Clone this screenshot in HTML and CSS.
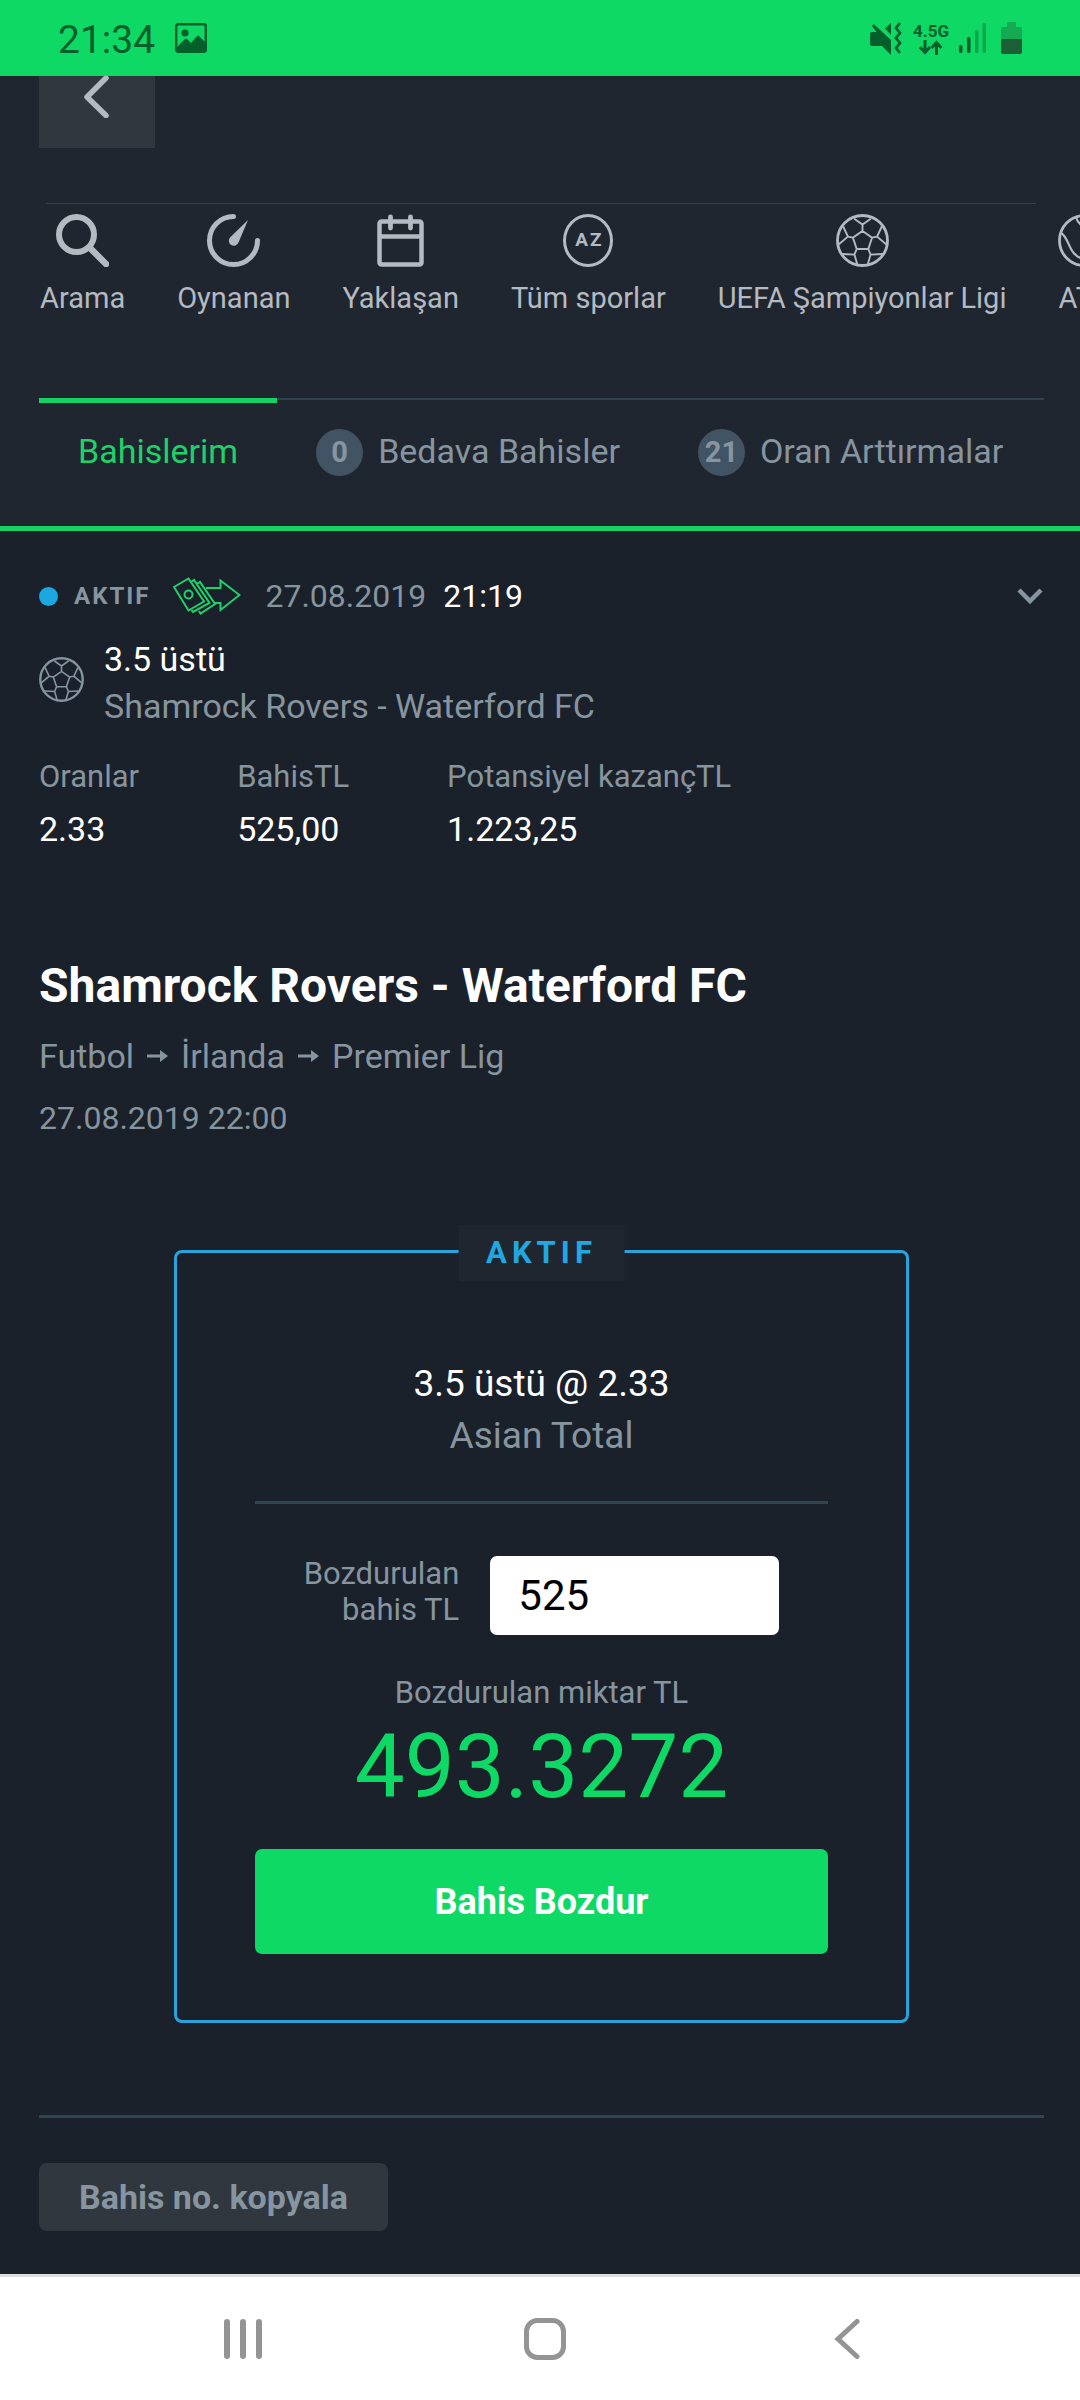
FILE: index.html
```html
<!DOCTYPE html>
<html lang="tr">
<head>
    <meta charset="UTF-8">
    <meta name="viewport" content="width=device-width, initial-scale=1.0">
    <title>Bahislerim</title>
    <link rel="stylesheet" href="styles.css">
</head>
<body>
    <svg class="defs" width="0" height="0">
        <symbol id="football" viewBox="0 0 53 53">
            <circle cx="26.5" cy="26.5" r="25" stroke-width="2.8"/>
            <path d="M26.5 17l9.6 6.6-3.8 11.4H20.7l-3.8-11.4zM26.5 17v-6.5M18.2 4.7l8.3 5.8 8.3-5.8M36.1 23.6l5-1M45.8 12.5l-4.7 10.1L51 31M16.9 23.6l-5-1M7.2 12.5l4.7 10.1L2 31M32.3 35l2.3 5.6M46.8 40l-12.2.6-3 10.2M20.7 35l-2.3 5.6M6.2 40l12.2.6 3 10.2" stroke-width="1.9"/>
        </symbol>
    </svg>

    <div class="status-bar">
        <span class="clock">21:34</span>
        <svg class="picture" width="32" height="30" viewBox="0 0 32 30">
            <rect x="1.2" y="1.2" width="29.6" height="27.6" rx="2" fill="none" stroke="currentColor" stroke-width="2.4"/>
            <circle cx="10" cy="10" r="3.6"/>
            <path d="M2 24l8-8q1-1 2 0l4 4 6-7q1-1 2 0l6 6v8q0 1-1 1H3q-1 0-1-1z"/>
        </svg>
        <div class="status-right">
            <svg width="33" height="33" viewBox="0 0 33 33">
                <path d="M2 10h4.500L2 4l1.700-2L21 18v15l-9-9H2q-2 0-2-2V12q0-2 2-2zM21 1v12l-6-6.500z"/>
                <path d="M30 1l-4 5 4 5-4 5 4 5-4 5 4 5" fill="none" stroke="currentColor" stroke-width="2.800"/>
            </svg>
            <div class="network">
                <span>4.5G</span>
                <svg width="24" height="15" viewBox="0 0 24 15" fill="none" stroke="currentColor" stroke-width="3">
                    <path d="M6 0v12M1 7l5 5.500L11 7M17.500 15V3M12.500 8l5-5.500 5 5.500"/>
                </svg>
            </div>
            <svg width="28" height="32" viewBox="0 0 28 32">
                <rect y="23" width="3.500" height="8" rx="1.500"/>
                <rect x="8" y="15" width="3.500" height="16" rx="1.500"/>
                <rect class="dim" x="16" y="8" width="3.500" height="23" rx="1.500"/>
                <rect class="dim" x="23.500" y="1" width="3.500" height="30" rx="1.500"/>
            </svg>
            <svg class="battery" width="21" height="33" viewBox="0 0 21 33">
                <path class="battery-top" d="M6 0h9v5h4q2 0 2 2v10H0V7q0-2 2-2h4z"/>
                <path class="battery-fill" d="M0 17h21v13q0 2-2 2H2q-2 0-2-2z"/>
            </svg>
        </div>
    </div>

    <header class="header">
        <button class="back-btn" aria-label="Geri">
            <svg width="28" height="42" viewBox="0 0 28 42">
                <path d="M23 2L4 21l19 18.500" fill="none" stroke="currentColor" stroke-width="5.500" stroke-linecap="round" stroke-linejoin="round"/>
            </svg>
        </button>

        <nav class="shortcuts">
            <a href="#">
                <svg width="53" height="53" viewBox="0 0 53 53" stroke-linecap="round">
                    <circle cx="20.500" cy="20.500" r="17.500" stroke-width="6"/>
                    <path d="M34 34l16 16" stroke-width="6.500"/>
                </svg>
                Arama
            </a>
            <a href="#">
                <svg width="53" height="53" viewBox="0 0 53 53" stroke-linecap="round">
                    <path d="M26.500 2.500A24 24 0 1 0 50.500 26.500" stroke-width="5"/>
                    <path class="solid" d="M41 6L31.500 28.500a5 5 0 1 1-8.500-5z"/>
                </svg>
                Oynanan
            </a>
            <a href="#">
                <svg width="53" height="53" viewBox="0 0 53 53" stroke-linecap="round">
                    <rect x="5.500" y="7.500" width="42" height="43" rx="2" stroke-width="4.500"/>
                    <path d="M6 22.500h41" stroke-width="4.500"/>
                    <path d="M16.500 3v11M36.500 3v11" stroke-width="4.800"/>
                </svg>
                Yaklaşan
            </a>
            <a href="#">
                <span class="az">AZ</span>
                Tüm sporlar
            </a>
            <a href="#">
                <svg width="53" height="53"><use href="#football"/></svg>
                UEFA Şampiyonlar Ligi
            </a>
            <a href="#">
                <svg width="53" height="53" viewBox="0 0 53 53">
                    <circle cx="26.500" cy="26.500" r="25" stroke-width="2.800"/>
                    <path d="M3 19C12 24 10 42 26 45M18 3C22 18 40 12 50 31" stroke-width="2.200"/>
                </svg>
                ATP
            </a>
        </nav>

        <nav class="tabs">
            <a href="#" class="tab active">Bahislerim</a>
            <a href="#" class="tab"><span class="badge">0</span>Bedava Bahisler</a>
            <a href="#" class="tab"><span class="badge">21</span>Oran Arttırmalar</a>
        </nav>
    </header>

    <main class="content">
        <div class="bet-head">
            <span class="dot"></span>
            <span class="bet-status">AKTIF</span>
            <svg class="cash" width="68" height="38" viewBox="0 0 68 38">
                <path d="M1 10L15.500 1.500 31 24.500 15.500 33.500z"/>
                <circle cx="15.500" cy="17.500" r="4"/>
                <path d="M18 5l3-2L36.500 26 20 35l-1.500-2M24 7l3-2L42 27 27.500 36.500 26 34M33 11h14.500V3.500L66.500 18 47.500 33v-7H41"/>
            </svg>
            <span class="bet-date">27.08.2019</span>
            <span class="bet-time">21:19</span>
            <button class="toggle" aria-label="Detay">
                <svg width="28" height="18" viewBox="0 0 28 18">
                    <path d="M3 3l11 11L25 3" fill="none" stroke="currentColor" stroke-width="4.500"/>
                </svg>
            </button>
        </div>

        <div class="selection">
            <svg width="45" height="45"><use href="#football"/></svg>
            <div>
                <p class="white">3.5 üstü</p>
                <p>Shamrock Rovers - Waterford FC</p>
            </div>
        </div>

        <dl class="stats">
            <div><dt>Oranlar</dt><dd>2.33</dd></div>
            <div><dt>BahisTL</dt><dd>525,00</dd></div>
            <div><dt>Potansiyel kazançTL</dt><dd>1.223,25</dd></div>
        </dl>

        <h1>Shamrock Rovers - Waterford FC</h1>
        <div class="breadcrumb">
            <span>Futbol</span>
            <svg width="21" height="14" viewBox="0 0 21 14"><path d="M0 5.500h13V1l8 6-8 6V8.500H0z"/></svg>
            <span>İrlanda</span>
            <svg width="21" height="14" viewBox="0 0 21 14"><path d="M0 5.500h13V1l8 6-8 6V8.500H0z"/></svg>
            <span>Premier Lig</span>
        </div>
        <p class="match-date">27.08.2019 22:00</p>

        <section class="cashout">
            <span class="cashout-tag">AKTIF</span>
            <p class="white">3.5 üstü @ 2.33</p>
            <p>Asian Total</p>
            <hr>
            <div class="form-group">
                <label for="stake">Bozdurulan<br>bahis TL</label>
                <input type="text" id="stake" value="525">
            </div>
            <div class="amount-label">Bozdurulan miktar TL</div>
            <div class="amount">493.3272</div>
            <button class="cashout-btn">Bahis Bozdur</button>
        </section>

        <hr>
        <button class="copy-btn">Bahis no. kopyala</button>
    </main>

    <footer class="nav-bar">
        <button aria-label="Son uygulamalar">
            <svg width="40" height="42" viewBox="0 0 40 42" stroke-width="6" stroke-linecap="round">
                <path d="M4 4v34M20 4v34M36 4v34"/>
            </svg>
        </button>
        <button aria-label="Ana ekran">
            <svg width="42" height="42" viewBox="0 0 42 42" stroke-width="5">
                <rect x="2.500" y="2.500" width="37" height="37" rx="11"/>
            </svg>
        </button>
        <button aria-label="Geri">
            <svg width="26" height="42" viewBox="0 0 26 42" stroke-width="5" stroke-linecap="round">
                <path d="M23 3.500L4 21l19 17.500"/>
            </svg>
        </button>
    </footer>
</body>
</html>
```
FILE: styles.css
```css
* {
    box-sizing: border-box;
}

body {
    font-family: Roboto, "Liberation Sans", sans-serif;
    font-size: 34px;
    margin: 0;
    min-height: 100vh;
    background-color: #1b212a;
    color: #86959f;
    display: flex;
    flex-direction: column;
}

h1, p, dl, dd {
    margin: 0;
}

a {
    color: inherit;
    text-decoration: none;
}

button {
    font-family: inherit;
    border: none;
    padding: 0;
    background: none;
    color: inherit;
    cursor: pointer;
}

svg {
    display: block;
    flex-shrink: 0;
}

hr {
    height: 3px;
    border: none;
    background-color: #304550;
}

.defs {
    position: absolute;
}

.white {
    color: #fff;
}

/* status bar */
.status-bar {
    display: flex;
    align-items: center;
    height: 76px;
    padding: 0 58px;
    background-color: #0dd964;
    color: #03602b;
}

.status-bar svg {
    fill: currentColor;
}

.clock {
    font-size: 39px;
    line-height: 44px;
    padding-top: 4px;
}

.picture {
    margin-left: 20px;
}

.status-right {
    display: flex;
    align-items: center;
    gap: 10px;
    margin-left: auto;
}

.network {
    display: flex;
    flex-direction: column;
    align-items: center;
    font-size: 17px;
    font-weight: bold;
    line-height: 18px;
}

.status-bar .network svg {
    fill: none;
}

.dim {
    opacity: 0.4;
}

.battery {
    margin-left: 4px;
}

.battery-top {
    fill: #15aa52;
}

.battery-fill {
    fill: #1c5f37;
}

/* header */
.header {
    background-color: #20262f;
    border-bottom: 5px solid #14d364;
    overflow: hidden;
}

.back-btn {
    display: flex;
    justify-content: center;
    width: 116px;
    height: 72px;
    margin-left: 39px;
    background-color: #31373f;
    color: #b4bac2;
}

.shortcuts {
    display: flex;
    gap: 52px;
    margin: 55px 44px 0 46px;
    padding-top: 10px;
    border-top: 1px solid #3a4048;
    color: #b4bac2;
    font-size: 29px;
    line-height: 40px;
    white-space: nowrap;
}

.shortcuts a {
    display: flex;
    flex-direction: column;
    align-items: center;
    gap: 11px;
}

.shortcuts a:first-child {
    margin-left: -6px;
}

.shortcuts svg,
.selection svg {
    fill: none;
    stroke: currentColor;
}

.shortcuts .solid {
    fill: currentColor;
    stroke: none;
}

.az {
    width: 50px;
    height: 53px;
    border: 3px solid;
    border-radius: 50%;
    font-size: 19px;
    font-weight: bold;
    line-height: 46px;
    letter-spacing: 2px;
    padding-left: 2px;
    text-align: center;
}

.tabs {
    display: flex;
    margin: 80px 36px 0 39px;
    border-top: 2px solid #2f424d;
    height: 128px;
    line-height: 44px;
    white-space: nowrap;
}

.tab {
    display: flex;
    align-items: flex-start;
    gap: 15px;
    margin-top: -2px;
    padding: 26px 39px 0;
    border-top: 5px solid transparent;
}

.tab.active {
    color: #1fd169;
    border-color: #14d364;
}

.badge {
    width: 47px;
    height: 47px;
    border-radius: 50%;
    background-color: #425463;
    font-size: 29px;
    font-weight: bold;
    line-height: 47px;
    text-align: center;
}

/* bet */
.content {
    flex: 1;
    padding: 43px 36px 40px 39px;
}

.bet-head {
    display: flex;
    align-items: center;
    height: 44px;
    font-size: 32px;
}

.dot {
    width: 19px;
    height: 19px;
    border-radius: 50%;
    background-color: #1aa7e2;
}

.bet-status {
    margin-left: 16px;
    font-size: 24px;
    font-weight: bold;
    letter-spacing: 2px;
}

.cash {
    margin-left: 23px;
    fill: none;
    stroke: #1fd169;
    stroke-width: 2;
}

.bet-date {
    margin-left: 24px;
}

.bet-time {
    margin-left: 17px;
    color: #fff;
}

.toggle {
    margin-left: auto;
}

.selection {
    display: flex;
    gap: 20px;
    margin-top: 18px;
    line-height: 47px;
}

.selection svg {
    margin-top: 21px;
}

.stats {
    display: flex;
    gap: 98px;
    margin-top: 20px;
    line-height: 53px;
}

.stats dt {
    font-size: 31px;
}

.stats dd {
    color: #fff;
}

h1 {
    margin-top: 100px;
    color: #fff;
    font-size: 48px;
    line-height: 60px;
}

.breadcrumb {
    display: flex;
    align-items: center;
    gap: 13px;
    margin-top: 18px;
    line-height: 44px;
}

.breadcrumb svg {
    fill: currentColor;
}

.match-date {
    margin-top: 18px;
    font-size: 32px;
    line-height: 44px;
}

/* cash out box */
.cashout {
    position: relative;
    margin: 110px 135px 92px;
    padding: 105px 78px 66px;
    border: 3px solid #2aa3dc;
    border-radius: 8px;
    font-size: 37px;
    line-height: 52px;
    text-align: center;
}

.cashout-tag {
    position: absolute;
    top: -28px;
    left: 50%;
    transform: translateX(-50%);
    padding: 0 28px;
    background-color: #20262f;
    color: #1fa8e2;
    font-size: 31px;
    font-weight: bold;
    line-height: 56px;
    letter-spacing: 5px;
}

.cashout hr {
    margin: 39px 0 52px;
}

.form-group {
    display: flex;
    justify-content: center;
    align-items: flex-start;
    gap: 31px;
}

.form-group label {
    font-size: 31px;
    line-height: 36px;
    text-align: right;
}

.form-group input {
    width: 289px;
    height: 79px;
    padding: 0 28px;
    border: none;
    border-radius: 7px;
    background-color: #fff;
    color: #000;
    font-family: inherit;
    font-size: 42px;
}

.amount-label {
    margin-top: 38px;
    font-size: 31px;
    line-height: 40px;
}

.amount {
    margin-top: 2px;
    color: #0dd964;
    font-size: 89px;
    line-height: 104px;
}

.cashout-btn {
    width: 100%;
    height: 105px;
    margin-top: 30px;
    border-radius: 7px;
    background-color: #0dd964;
    color: #fff;
    font-size: 36px;
    font-weight: bold;
    display: block;
}

.content > hr {
    margin: 0;
}

.copy-btn {
    height: 68px;
    margin-top: 45px;
    padding: 0 40px;
    border-radius: 8px;
    background-color: #31373f;
    font-size: 34px;
    font-weight: bold;
}

/* bottom navigation */
.nav-bar {
    display: grid;
    grid-template-columns: repeat(3, 1fr);
    height: 126px;
    padding: 0 82px 0 92px;
    border-top: 3px solid #ddd;
    background-color: #fff;
    color: #949494;
}

.nav-bar button {
    display: flex;
    align-items: center;
    justify-content: center;
}

.nav-bar svg {
    fill: none;
    stroke: currentColor;
}
```
